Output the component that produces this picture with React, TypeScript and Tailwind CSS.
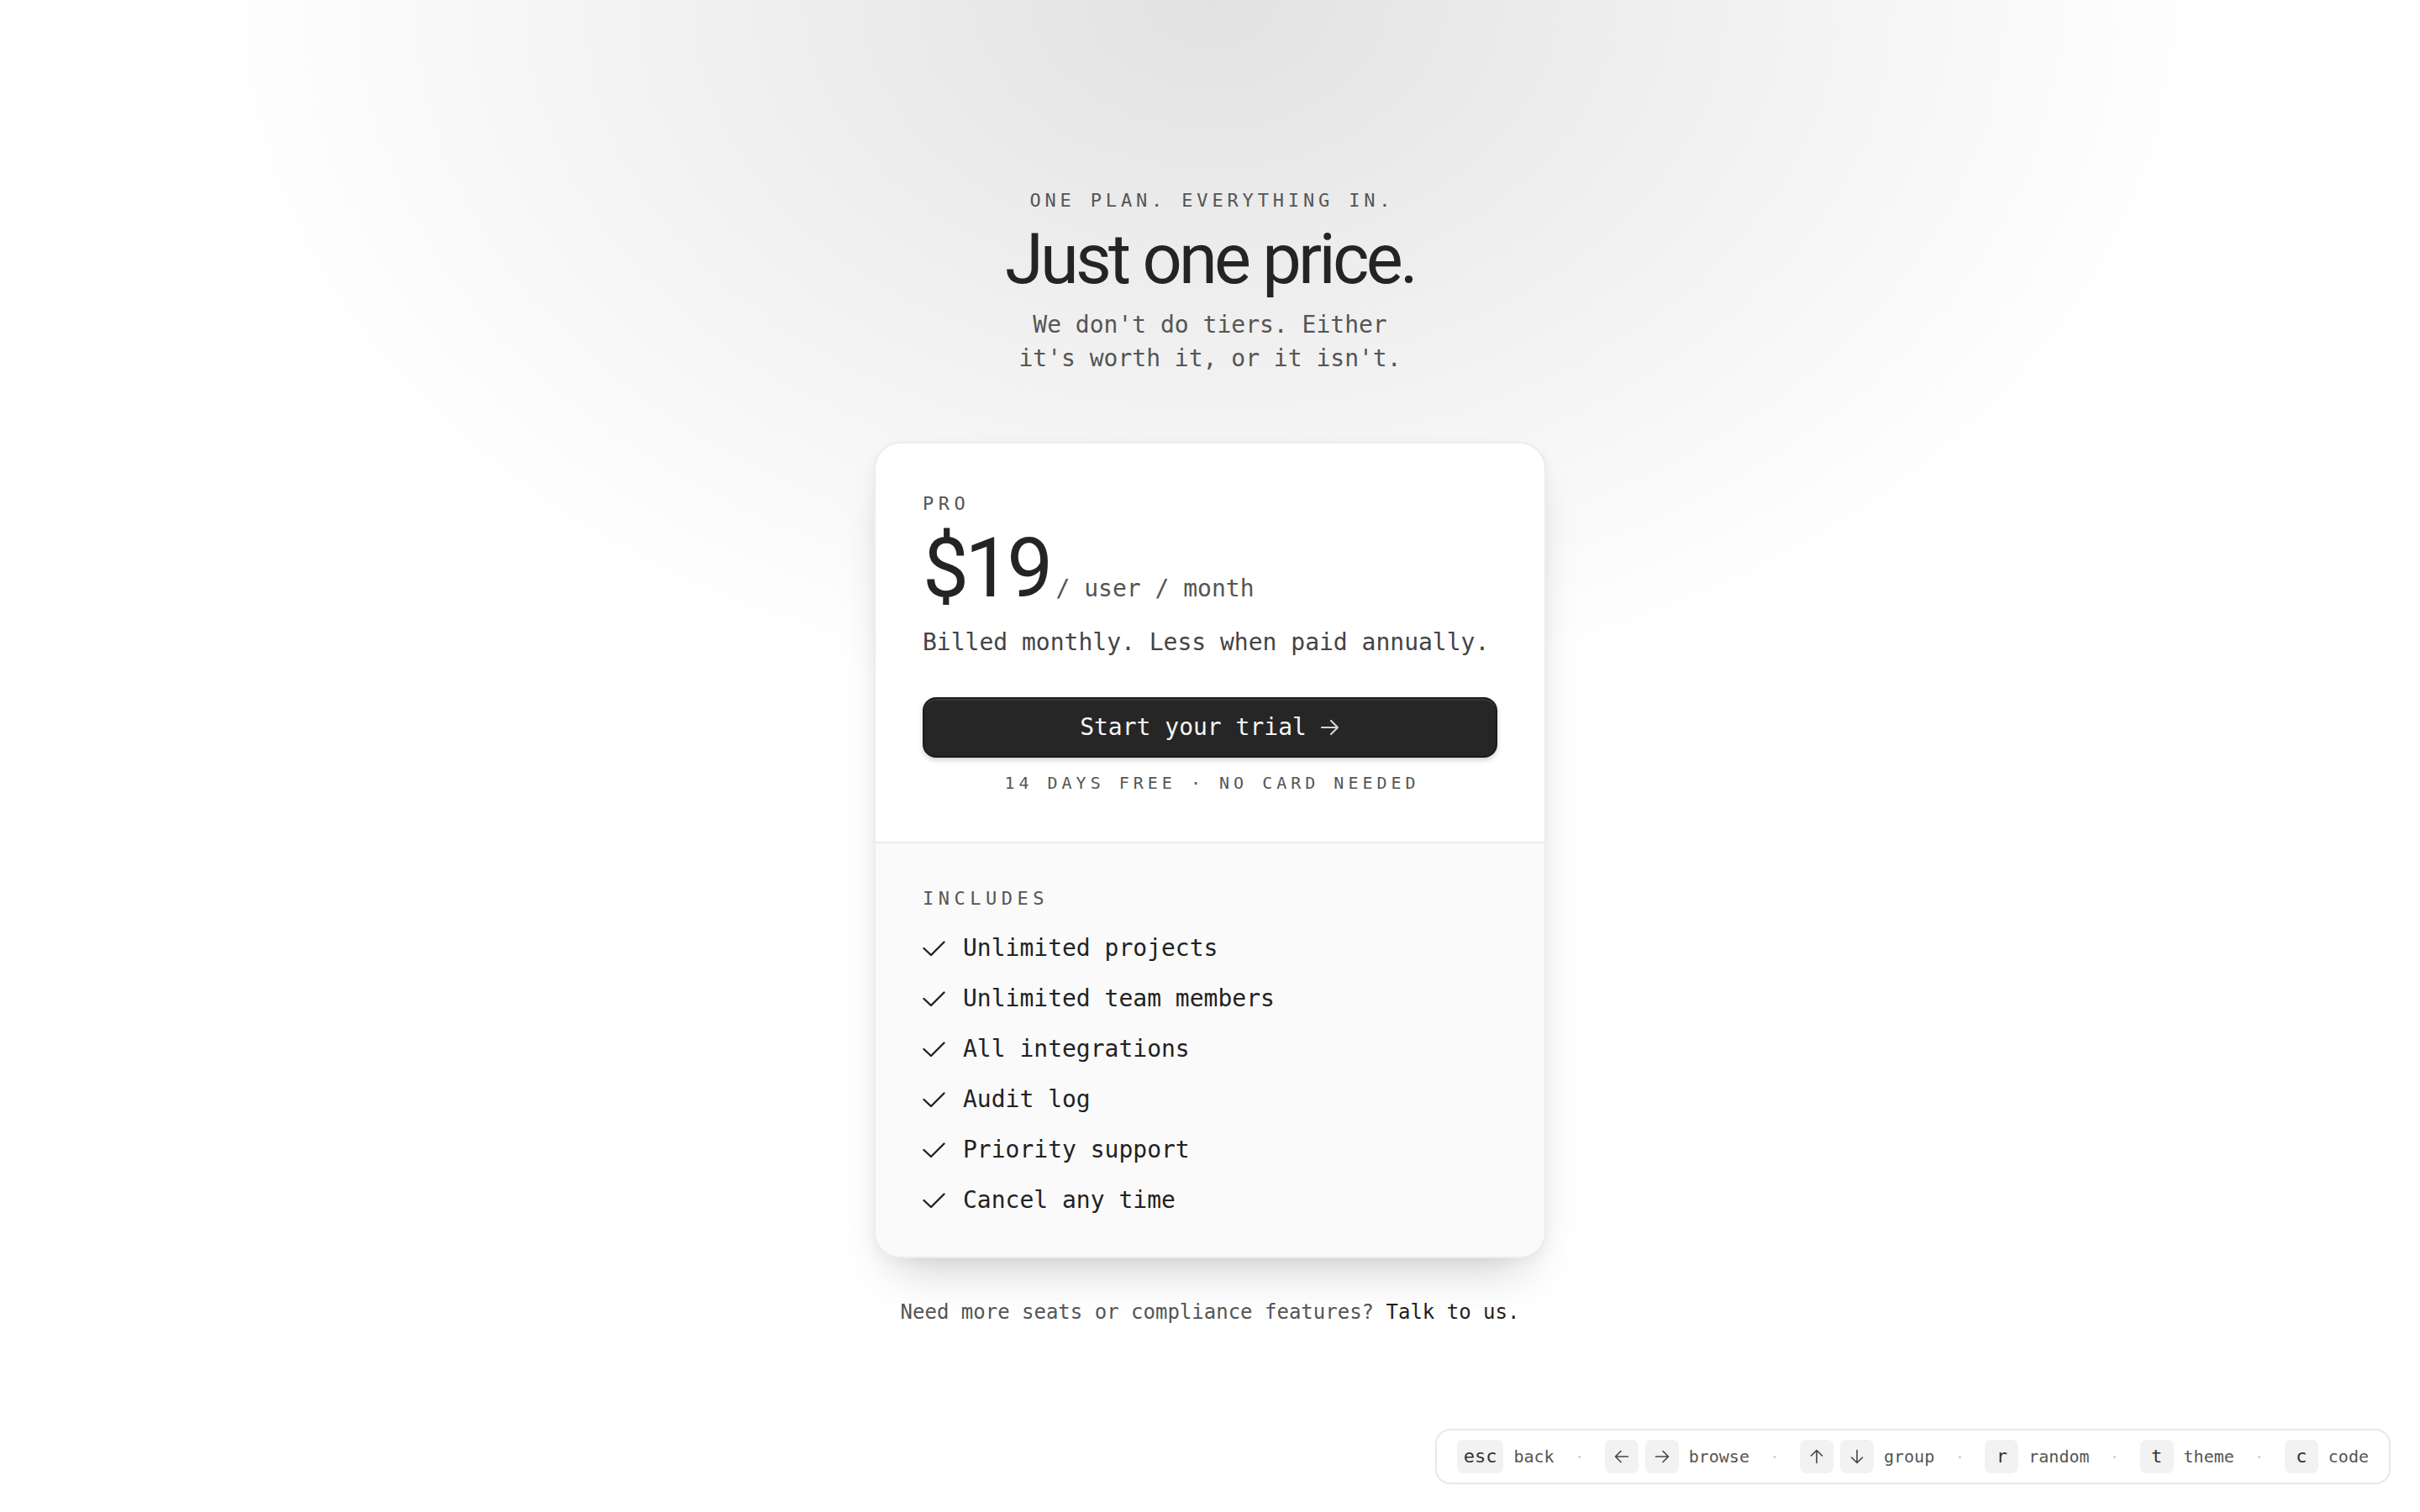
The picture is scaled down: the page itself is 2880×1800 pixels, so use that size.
import React from "react";

const features = [
  "Unlimited projects",
  "Unlimited team members",
  "All integrations",
  "Audit log",
  "Priority support",
  "Cancel any time",
];

function Check() {
  return (
    <svg width="27" height="19" viewBox="0 0 27 19" className="shrink-0">
      <polyline
        points="1.5,9 10,17 25.5,1.5"
        fill="none"
        stroke="#222222"
        strokeWidth="2.4"
        strokeLinecap="round"
        strokeLinejoin="round"
      />
    </svg>
  );
}

function Arrow() {
  return (
    <svg width="24" height="22" viewBox="0 0 24 22" className="shrink-0">
      <path
        d="M2 11h19M13 3l8 8-8 8"
        fill="none"
        stroke="#d4d4d4"
        strokeWidth="2.2"
        strokeLinecap="round"
        strokeLinejoin="round"
      />
    </svg>
  );
}

function KeyArrow({ dir }: { dir: "left" | "right" | "up" | "down" }) {
  const rot = dir === "right" ? 0 : dir === "down" ? 90 : dir === "left" ? 180 : 270;
  return (
    <svg width="20" height="20" viewBox="0 0 20 20" style={{ transform: `rotate(${rot}deg)` }}>
      <path
        d="M2.5 10h15M11 3.5l6.5 6.5-6.5 6.5"
        fill="none"
        stroke="#444"
        strokeWidth="1.6"
        strokeLinecap="round"
        strokeLinejoin="round"
      />
    </svg>
  );
}

function Key({ children, wide }: { children: React.ReactNode; wide?: boolean }) {
  return (
    <span
      className={
        wide
          ? "flex h-10 items-center justify-center rounded-[8px] bg-[#f2f2f2] px-2 text-[22px] leading-none text-[#333]"
          : "flex h-10 w-10 items-center justify-center rounded-[8px] bg-[#f2f2f2] text-[22px] leading-none text-[#333]"
      }
    >
      {children}
    </span>
  );
}

function Label({ children }: { children: React.ReactNode }) {
  return <span className="ml-1 text-[20px] leading-none text-[#555]">{children}</span>;
}

function Dot() {
  return <span className="text-[20px] leading-none text-[#cfcfcf]">·</span>;
}

export default function App() {
  return (
    <div className="relative h-screen w-full overflow-hidden bg-white bg-[image:radial-gradient(ellipse_1190px_850px_at_50%_0%,#e2e2e2_0%,#efefef_45%,#ffffff_100%)] font-['DejaVu_Sans_Mono',monospace]">
      <main className="flex flex-col items-center pt-[223px]">
        <p className="pl-[0.22em] text-[22px] leading-[32px] tracking-[0.22em] text-[#555]">
          ONE PLAN. EVERYTHING IN.
        </p>
        <h1 className="mt-2 font-['Roboto',sans-serif] text-[83px] font-normal leading-[92px] tracking-[-0.045em] text-[#242424]">
          Just one price.
        </h1>
        <p className="mt-3 max-w-[480px] text-center text-[28px] leading-[40px] text-[#555]">
          We don't do tiers. Either it's worth it, or it isn't.
        </p>

        <div className="mt-[79px] w-[800px] overflow-hidden rounded-[32px] border-2 border-[#ececec] bg-white shadow-[0_32px_60px_-24px_rgba(0,0,0,0.22),0_4px_16px_rgba(0,0,0,0.04)]">
          <div className="px-14 pb-[56px] pt-[56px]">
            <p className="text-[22px] leading-[32px] tracking-[0.25em] text-[#555]">PRO</p>
            <div className="mt-[12px] flex items-baseline gap-2">
              <span className="font-['Roboto',sans-serif] text-[98px] leading-[98px] tracking-[-0.05em] text-[#242424]">
                $19
              </span>
              <span className="text-[28px] text-[#555]">/ user / month</span>
            </div>
            <p className="mt-[19px] text-[28px] leading-[40px] text-[#444]">
              Billed monthly. Less when paid annually.
            </p>
            <button className="mt-[45px] flex h-[72px] w-full items-center justify-center gap-4 rounded-[16px] border-2 border-[#1c1c1c] bg-[#262626] text-[28px] text-[#f5f5f5] shadow-[inset_0_2px_0_rgba(255,255,255,0.08),0_3px_6px_rgba(0,0,0,0.18)]">
              <span>Start your trial</span>
              <Arrow />
            </button>
            <p className="mt-4 pl-[0.25em] text-center text-[20px] leading-[28px] tracking-[0.25em] text-[#555]">
              14 DAYS FREE · NO CARD NEEDED
            </p>
          </div>
          <div className="border-t-2 border-[#ececec] bg-[#fafafa] px-14 pb-[47px] pt-[50px]">
            <p className="text-[22px] leading-[32px] tracking-[0.25em] text-[#555]">INCLUDES</p>
            <ul className="mt-[23px] flex flex-col gap-5">
              {features.map((f) => (
                <li key={f} className="flex items-center gap-[21px] text-[28px] leading-[40px] text-[#222]">
                  <Check />
                  <span>{f}</span>
                </li>
              ))}
            </ul>
          </div>
        </div>

        <p className="mt-[46px] text-[24px] leading-[36px] text-[#555]">
          Need more seats or compliance features? <span className="text-[#1f1f1f]">Talk to us.</span>
        </p>
      </main>

      <div className="fixed bottom-[33px] right-[35px] flex items-center gap-6 rounded-[18px] border-2 border-[#e8e8e8] bg-white px-6 py-[11px]">
        <div className="flex items-center gap-2">
          <Key wide>esc</Key>
          <Label>back</Label>
        </div>
        <Dot />
        <div className="flex items-center gap-2">
          <Key>
            <KeyArrow dir="left" />
          </Key>
          <Key>
            <KeyArrow dir="right" />
          </Key>
          <Label>browse</Label>
        </div>
        <Dot />
        <div className="flex items-center gap-2">
          <Key>
            <KeyArrow dir="up" />
          </Key>
          <Key>
            <KeyArrow dir="down" />
          </Key>
          <Label>group</Label>
        </div>
        <Dot />
        <div className="flex items-center gap-2">
          <Key>r</Key>
          <Label>random</Label>
        </div>
        <Dot />
        <div className="flex items-center gap-2">
          <Key>t</Key>
          <Label>theme</Label>
        </div>
        <Dot />
        <div className="flex items-center gap-2">
          <Key>c</Key>
          <Label>code</Label>
        </div>
      </div>
    </div>
  );
}
